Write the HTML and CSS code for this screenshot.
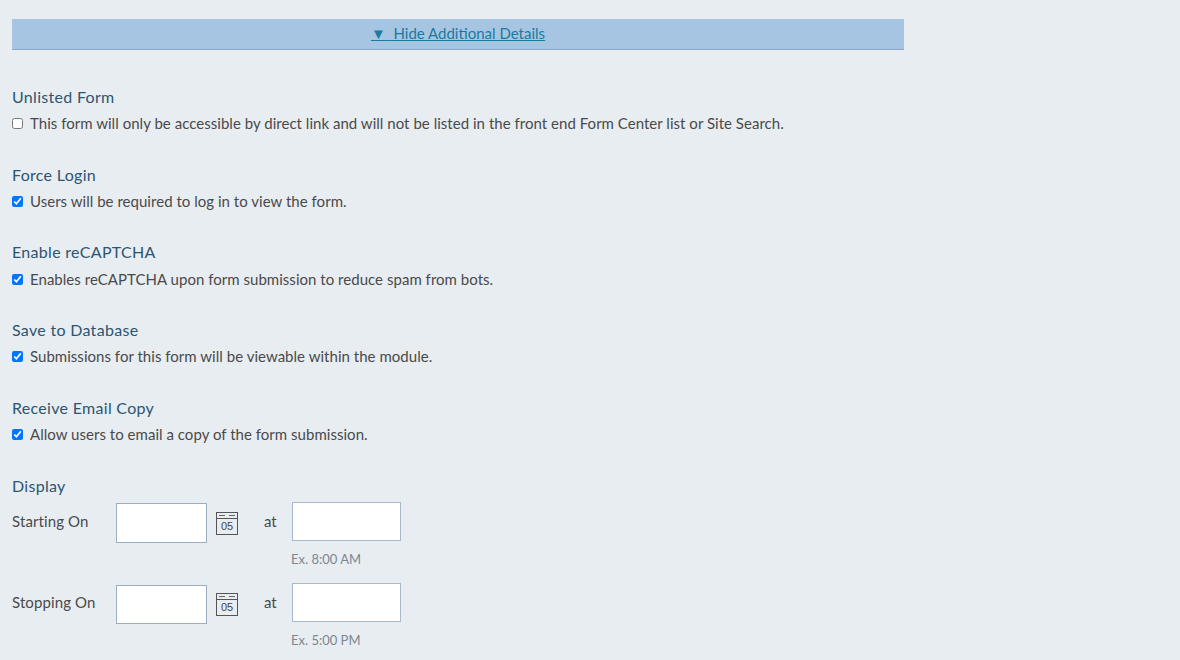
FILE: index.html
```html
<!DOCTYPE html>
<html lang="en">

<head>
    <meta charset="UTF-8">
    <title>Additional Details</title>
    <link rel="stylesheet" href="styles.css">
</head>

<body>
    <div class="details">
        <div class="toggle-bar">
            <a href="#" class="toggle-link"><span class="arrow">▼</span>&nbsp;&nbsp;Hide Additional Details</a>
        </div>

        <div class="option first">
            <h3>Unlisted Form</h3>
            <label><input type="checkbox">This form will only be accessible by direct link and will not be listed in the front end Form Center list or Site Search.</label>
        </div>

        <div class="option">
            <h3>Force Login</h3>
            <label><input type="checkbox" checked>Users will be required to log in to view the form.</label>
        </div>

        <div class="option">
            <h3>Enable reCAPTCHA</h3>
            <label><input type="checkbox" checked>Enables reCAPTCHA upon form submission to reduce spam from bots.</label>
        </div>

        <div class="option">
            <h3>Save to Database</h3>
            <label><input type="checkbox" checked>Submissions for this form will be viewable within the module.</label>
        </div>

        <div class="option">
            <h3>Receive Email Copy</h3>
            <label><input type="checkbox" checked>Allow users to email a copy of the form submission.</label>
        </div>

        <div class="display">
            <h3>Display</h3>

            <div class="date-row">
                <span class="date-label">Starting On</span>
                <input type="text" class="date-input">
                <svg class="cal-icon" width="22" height="23" viewBox="0 0 22 23">
                    <rect x="0.5" y="0.5" width="21" height="22" fill="none" stroke="#555"/>
                    <line x1="0" y1="6.5" x2="22" y2="6.5" stroke="#555"/>
                    <line x1="3" y1="3.5" x2="9" y2="3.5" stroke="#666"/>
                    <line x1="13" y1="3.5" x2="19" y2="3.5" stroke="#666"/>
                    <text x="11" y="18" text-anchor="middle" class="cal-text">05</text>
                </svg>
                <span class="at">at</span>
                <div class="time-col">
                    <input type="text" class="time-input">
                    <div class="hint">Ex. 8:00 AM</div>
                </div>
            </div>

            <div class="date-row second">
                <span class="date-label">Stopping On</span>
                <input type="text" class="date-input">
                <svg class="cal-icon" width="22" height="23" viewBox="0 0 22 23">
                    <rect x="0.5" y="0.5" width="21" height="22" fill="none" stroke="#555"/>
                    <line x1="0" y1="6.5" x2="22" y2="6.5" stroke="#555"/>
                    <line x1="3" y1="3.5" x2="9" y2="3.5" stroke="#666"/>
                    <line x1="13" y1="3.5" x2="19" y2="3.5" stroke="#666"/>
                    <text x="11" y="18" text-anchor="middle" class="cal-text">05</text>
                </svg>
                <span class="at">at</span>
                <div class="time-col">
                    <input type="text" class="time-input">
                    <div class="hint">Ex. 5:00 PM</div>
                </div>
            </div>
        </div>
    </div>
</body>

</html>
```

FILE: styles.css
```css
body {
    margin: 0;
    padding: 19px 0 0 12px;
    background-color: #e8edf2;
    font-family: Lato, "Open Sans", sans-serif;
    font-size: 15px;
    color: #4a4a4a;
    overflow: hidden;
}

.details {
    width: 892px;
}

.toggle-bar {
    height: 30px;
    line-height: 28px;
    text-align: center;
    background-color: #a6c5e2;
    border-bottom: 1px solid #8ea9c8;
}

.toggle-link {
    color: #1b7a9e;
    font-size: 15px;
}

.arrow {
    font-size: 15px;
}

h3 {
    margin: 0;
    font-size: 16px;
    font-weight: 400;
    line-height: 20px;
    letter-spacing: 0.3px;
    color: #2d5570;
}

.option {
    height: 77.8px;
}

.option.first {
    margin-top: 36.8px;
}

.option label {
    display: flex;
    align-items: center;
    height: 20px;
    margin-top: 6.3px;
    letter-spacing: 0.03px;
}

.option input {
    width: 11px;
    height: 11px;
    margin: 1px 7px 0 0;
}

.date-row {
    display: flex;
    align-items: flex-start;
    margin-top: 6px;
}

.date-row.second {
    margin-top: 15.6px;
}

.date-label {
    width: 104px;
    line-height: 38px;
    letter-spacing: 0.1px;
}

.date-input {
    box-sizing: border-box;
    width: 91px;
    height: 40px;
    margin: 0.8px 0 0;
    border: 1px solid #9badc0;
    background: white;
}

.second .date-input {
    margin-top: 2px;
    height: 39px;
}

.cal-icon {
    margin: 9.8px 0 0 9px;
}

.second .cal-icon {
    margin-top: 10px;
}

.cal-text {
    font-family: "Liberation Sans", sans-serif;
    font-size: 11px;
    fill: #444;
}

.at {
    width: 28px;
    margin-left: 26px;
    line-height: 38px;
}

.time-col {
    width: 109px;
}

.time-input {
    display: block;
    box-sizing: border-box;
    width: 109px;
    height: 39.5px;
    margin: 0;
    border: 1px solid #a9b9cb;
    background: white;
}

.hint {
    margin: 10px 0 0 -1px;
    font-size: 13px;
    line-height: 16px;
    color: #7d8790;
}
```
